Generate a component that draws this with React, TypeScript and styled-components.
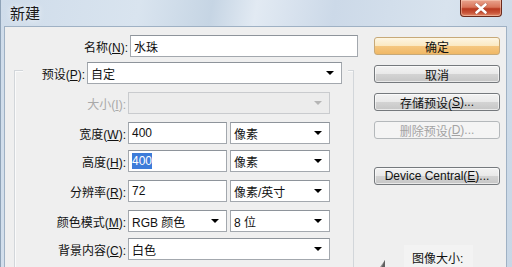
import React from "react";
import styled, { createGlobalStyle, css } from "styled-components";

const Global = createGlobalStyle`
  html, body { margin: 0; padding: 0; background: #dfe8f1; }
  body { font-family: "Liberation Sans", "Noto Sans CJK SC", sans-serif; }
`;

const FONT = `"Liberation Sans", "Noto Sans CJK SC", sans-serif`;

const Window = styled.div`
  width: 512px;
  height: 267px;
  overflow: hidden;
  display: flex;
  flex-direction: column;
  padding: 0 5px 0 3px;
  box-sizing: border-box;
  background: linear-gradient(100deg, #cfdcea 0%, #d9e4ef 25%, #c6d5e4 38%, #e2eaf3 46%, #ccd9e8 60%, #d8e3ee 80%, #c8d7e6 100%);
  border-left: 1px solid #8fa3b8;
`;

const TitleBar = styled.div`
  height: 26px;
  display: flex;
  align-items: flex-start;
  flex-shrink: 0;
`;

const Title = styled.div`
  font-family: "Noto Sans CJK SC", sans-serif;
  font-size: 15px;
  line-height: 26px;
  color: #1a1a1a;
  padding-left: 6px;
  text-shadow: 0 0 6px rgba(255,255,255,0.9);
`;

const CloseButton = styled.div`
  margin-left: auto;
  margin-right: 5px;
  width: 42px;
  height: 17px;
  box-sizing: border-box;
  border: 1px solid #6b2a1c;
  border-top: none;
  border-radius: 0 0 4px 4px;
  background: linear-gradient(#e9a48e 0%, #d9755a 45%, #b8391f 55%, #c9553a 80%, #e08a6a 100%);
  display: flex;
  align-items: center;
  justify-content: center;
  box-shadow: inset 0 0 0 1px rgba(255,220,200,0.45);
`;

const Body = styled.div`
  flex: 1;
  display: flex;
  background: #efefef;
  border-top: 1px solid #9fb1c4;
  border-left: 1px solid #9fb1c4;
  border-right: 1px solid #9fb1c4;
`;

const LeftPane = styled.div`
  width: 352px;
  flex-shrink: 0;
  display: flex;
  flex-direction: column;
`;

const Row = styled.div<{ $gap?: number }>`
  display: flex;
  align-items: center;
  height: 22px;
  margin-top: ${(p) => p.$gap ?? 0}px;
  flex-shrink: 0;
`;

const Label = styled.div<{ $w: number; $disabled?: boolean }>`
  width: ${(p) => p.$w}px;
  box-sizing: border-box;
  padding-right: 2px;
  text-align: right;
  font-family: ${FONT};
  font-size: 12px;
  color: ${(p) => (p.$disabled ? "#a9a9a9" : "#111")};
  white-space: nowrap;
  flex-shrink: 0;
`;

const Key = styled.span`
  text-decoration: underline;
`;

const Field = styled.div<{ $w: number; $disabled?: boolean }>`
  width: ${(p) => p.$w}px;
  height: 22px;
  box-sizing: border-box;
  border: 1px solid ${(p) => (p.$disabled ? "#c9cbce" : "#a3a8ae")};
  border-top-color: ${(p) => (p.$disabled ? "#c9cbce" : "#8e949b")};
  background: ${(p) => (p.$disabled ? "#ececec" : "#ffffff")};
  display: flex;
  align-items: center;
  padding: 0 0 0 3px;
  font-family: ${FONT};
  font-size: 12px;
  color: #111;
  flex-shrink: 0;
`;

const Arrow = styled.div<{ $disabled?: boolean }>`
  margin-left: auto;
  margin-right: 7px;
  width: 0;
  height: 0;
  border-left: 4px solid transparent;
  border-right: 4px solid transparent;
  border-top: 4px solid ${(p) => (p.$disabled ? "#b5b5b5" : "#000")};
`;

const Selected = styled.span`
  background: #3d7cd9;
  color: #fff;
  padding: 1px 0;
`;

const GroupBox = styled.div`
  margin-top: 13px;
  margin-left: 9px;
  width: 340px;
  flex: 1;
  box-sizing: border-box;
  border: 1px solid #d2d6da;
  border-bottom: none;
  box-shadow: inset 1px 1px 0 #fafafa;
  display: flex;
  flex-direction: column;
`;

const Legend = styled.div`
  display: flex;
  align-items: center;
  align-self: flex-start;
  height: 22px;
  margin-top: -9px;
  margin-left: 8px;
  padding-right: 6px;
  background: #efefef;
`;

const Gap = styled.div<{ $w: number }>`
  width: ${(p) => p.$w}px;
  flex-shrink: 0;
`;

const RightPane = styled.div`
  flex: 1;
  display: flex;
  flex-direction: column;
  padding: 10px 0 0 17px;
`;

const buttonBase = css`
  width: 126px;
  height: 18px;
  box-sizing: border-box;
  border-radius: 3px;
  display: flex;
  align-items: center;
  justify-content: center;
  font-family: ${FONT};
  font-size: 12px;
  flex-shrink: 0;
`;

const Button = styled.div<{ $gap?: number; $variant?: "default" | "normal" | "disabled" }>`
  ${buttonBase};
  margin-top: ${(p) => p.$gap ?? 0}px;
  ${(p) =>
    p.$variant === "default"
      ? css`
          border: 1px solid #c7a978;
          background: linear-gradient(#fdf6e4 0%, #fbe9c2 48%, #f5c780 52%, #f0b865 100%);
          color: #111;
        `
      : p.$variant === "disabled"
      ? css`
          border: 1px solid #b4b8bb;
          background: #f4f4f4;
          color: #a3a3a3;
        `
      : css`
          border: 1px solid #75797d;
          background: linear-gradient(#f3f3f3 0%, #e9e9e9 48%, #d3d3d3 52%, #c6c6c6 100%);
          color: #111;
          box-shadow: inset 0 0 0 1px rgba(255, 255, 255, 0.6);
        `}
`;

const SizeInfo = styled.div`
  margin-top: 60px;
  display: flex;
  align-items: flex-end;
  gap: 18px;
`;

const InfoPanel = styled.div`
  background: #f3f3f3;
  padding: 4px 10px 0 8px;
  height: 22px;
  box-sizing: border-box;
  font-family: ${FONT};
  font-size: 12px;
  color: #111;
`;

const Cursor = styled.svg`
  display: block;
  margin-bottom: -8px;
`;

export default function App() {
  const LW = 113;
  return (
    <>
      <Global />
      <Window>
        <TitleBar>
          <Title>新建</Title>
          <CloseButton>
            <svg width="14" height="11" viewBox="0 0 14 11">
              <path d="M2.5 1.5 L11.5 9.5 M11.5 1.5 L2.5 9.5" stroke="#5a1a10" strokeWidth="3.6" strokeLinecap="round" opacity="0.35" />
              <path d="M2.5 1.5 L11.5 9.5 M11.5 1.5 L2.5 9.5" stroke="#ffffff" strokeWidth="2.6" strokeLinecap="round" />
            </svg>
          </CloseButton>
        </TitleBar>
        <Body>
          <LeftPane>
            <Row $gap={8}>
              <Label $w={125}>
                名称(<Key>N</Key>):
              </Label>
              <Field $w={228}>水珠</Field>
            </Row>
            <GroupBox>
              <Legend>
                <Label $w={64}>
                  预设(<Key>P</Key>):
                </Label>
                <Field $w={255}>
                  自定
                  <Arrow />
                </Field>
              </Legend>
              <Row $gap={8}>
                <Label $w={LW} $disabled>
                  大小(<Key>I</Key>):
                </Label>
                <Field $w={202} $disabled>
                  <Arrow $disabled />
                </Field>
              </Row>
              <Row $gap={8}>
                <Label $w={LW}>
                  宽度(<Key>W</Key>):
                </Label>
                <Field $w={99}>400</Field>
                <Gap $w={3} />
                <Field $w={100}>
                  像素
                  <Arrow />
                </Field>
              </Row>
              <Row $gap={6}>
                <Label $w={LW}>
                  高度(<Key>H</Key>):
                </Label>
                <Field $w={99}>
                  <Selected>400</Selected>
                </Field>
                <Gap $w={3} />
                <Field $w={100}>
                  像素
                  <Arrow />
                </Field>
              </Row>
              <Row $gap={8}>
                <Label $w={LW}>
                  分辨率(<Key>R</Key>):
                </Label>
                <Field $w={99}>72</Field>
                <Gap $w={3} />
                <Field $w={100}>
                  像素/英寸
                  <Arrow />
                </Field>
              </Row>
              <Row $gap={8}>
                <Label $w={LW}>
                  颜色模式(<Key>M</Key>):
                </Label>
                <Field $w={99}>
                  RGB 颜色
                  <Arrow />
                </Field>
                <Gap $w={3} />
                <Field $w={100}>
                  8 位
                  <Arrow />
                </Field>
              </Row>
              <Row $gap={6}>
                <Label $w={LW}>
                  背景内容(<Key>C</Key>):
                </Label>
                <Field $w={202}>
                  白色
                  <Arrow />
                </Field>
              </Row>
            </GroupBox>
          </LeftPane>
          <RightPane>
            <Button $variant="default">确定</Button>
            <Button $gap={10}>取消</Button>
            <Button $gap={10}>
              存储预设(<Key>S</Key>)...
            </Button>
            <Button $gap={10} $variant="disabled">
              删除预设(<Key>D</Key>)...
            </Button>
            <Button $gap={28}>
              Device Central(<Key>E</Key>)...
            </Button>
            <SizeInfo>
              <Cursor width="12" height="16" viewBox="0 0 12 16">
                <path d="M11 1 L2 14 L11 10 Z" fill="#8a8a8a" />
                <path d="M11 1 L6 12 L11 10 Z" fill="#5e5e5e" />
              </Cursor>
              <InfoPanel>图像大小:</InfoPanel>
            </SizeInfo>
          </RightPane>
        </Body>
      </Window>
    </>
  );
}
